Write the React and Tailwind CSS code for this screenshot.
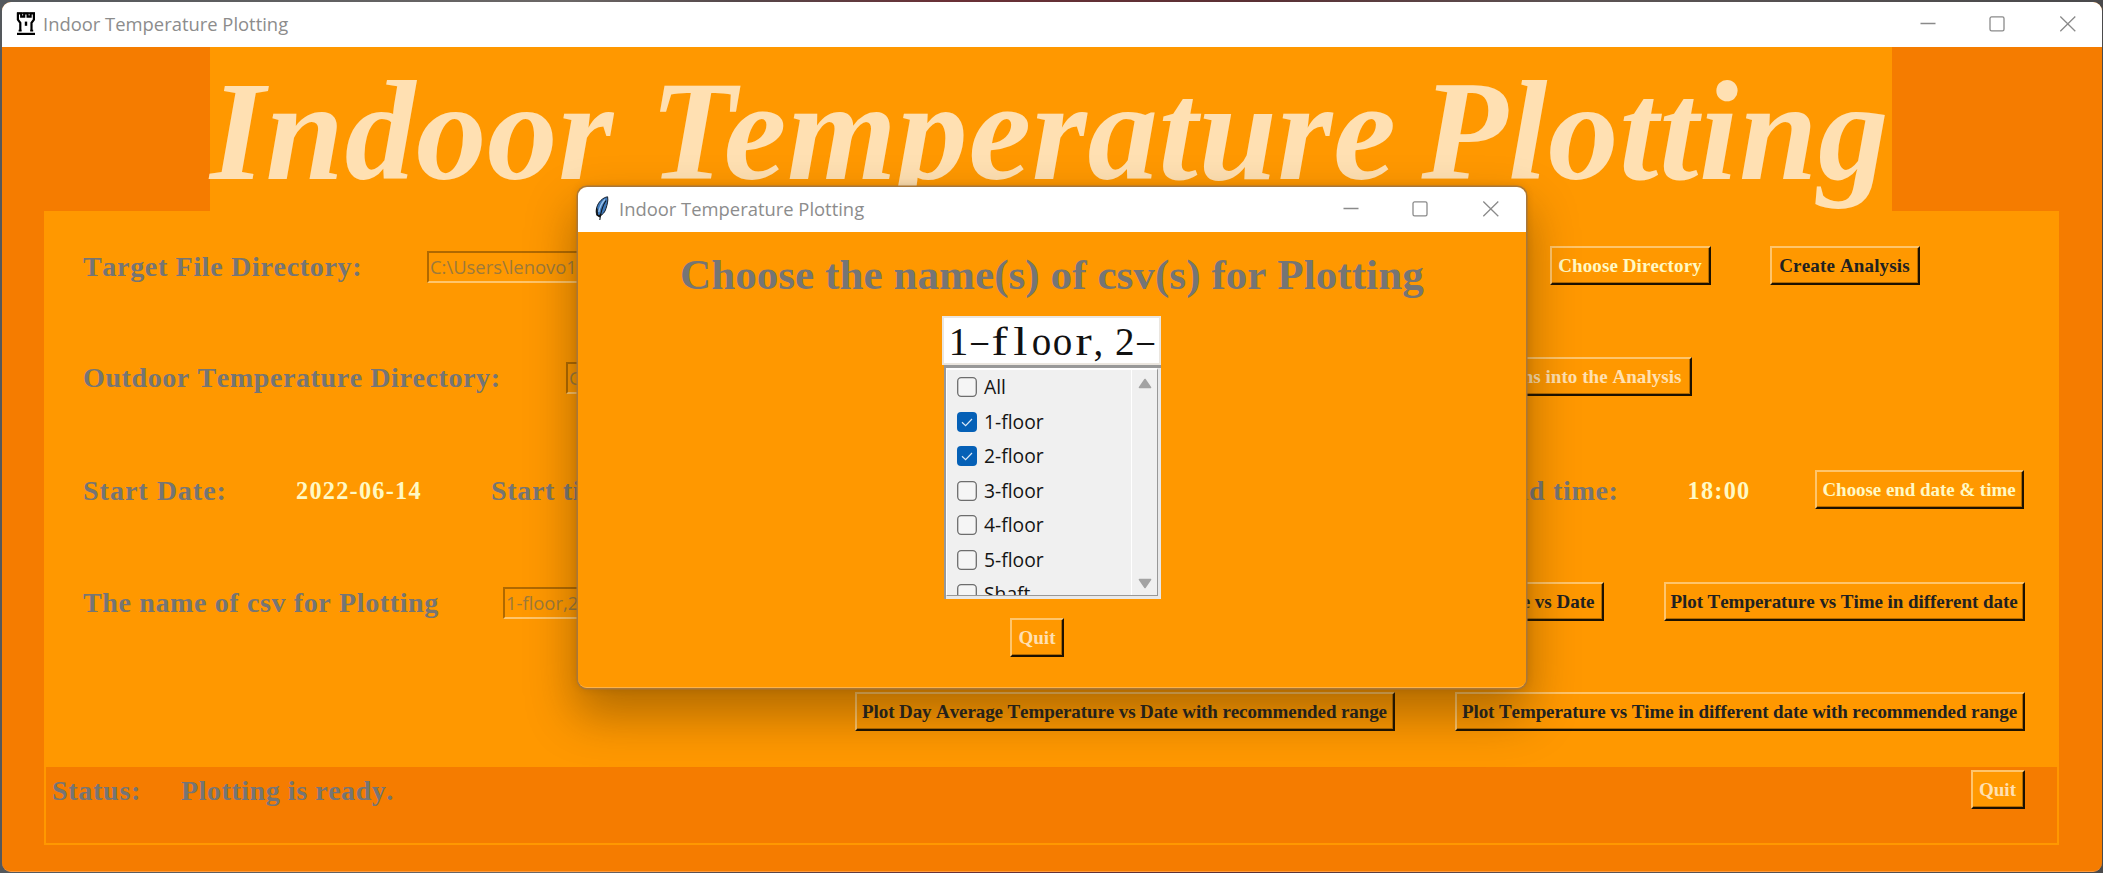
const SERIF = "font-['Liberation_Serif',serif] font-bold [font-kerning:none]";
const SANS = "font-['Open_Sans',sans-serif]";

function Label({ children, className = "tracking-[0.68px]" }) {
  return (
    <span className={`${SERIF} text-[28px] leading-[41px] text-[#757575] whitespace-pre shrink-0 ${className}`}>
      {children}
    </span>
  );
}

function Value({ children, className = "" }) {
  return (
    <span className={`${SERIF} text-[24.3px] leading-[41px] tracking-[1.25px] text-[#fff9c4] whitespace-pre shrink-0 ${className}`}>
      {children}
    </span>
  );
}

function Button({ children, className = "" }) {
  return (
    <button
      className={`${SERIF} h-[39px] shrink-0 bg-[#ff9800] border-2 border-t-[#ffc56b] border-l-[#ffc56b] border-r-[#1c1100] border-b-[#1c1100] shadow-[inset_-1px_-1px_0_#b46b00] text-[19px] leading-[35px] whitespace-pre flex ${className}`}
    >
      {children}
    </button>
  );
}

function Entry({ children, className = "" }) {
  return (
    <div
      className={`${SANS} h-[32px] mt-[5px] shrink-0 border-2 border-t-[#b06900] border-l-[#b06900] border-r-[#ffc56b] border-b-[#ffc56b] pl-[1px] text-[18.4px] leading-[27px] text-[#9c7a3c] whitespace-pre overflow-hidden ${className}`}
    >
      {children}
    </div>
  );
}

function WindowControls() {
  return (
    <svg width="156" height="16" viewBox="0 0 156 16" fill="none" stroke="#8a8a8a" strokeWidth="1.3" className="shrink-0">
      <path d="M0.5 7.5H15.5" />
      <rect x="70" y="0.9" width="14" height="14" rx="1.6" />
      <path d="M140.3 0.5L155.3 15.3M155.3 0.5L140.3 15.3" />
    </svg>
  );
}

function RookIcon() {
  return (
    <svg width="20" height="24" viewBox="0 0 20 24" className="shrink-0">
      <path
        d="M4.3 18.5V10.8L1.9 7.6V1.5H5.2V4.6H8.2V1.5H11.6V4.6H14.6V1.5H17.9V7.6L15.5 10.8V18.5"
        fill="none"
        stroke="#000"
        strokeWidth="2.2"
      />
      <rect x="1" y="0.3" width="18" height="1.6" fill="#000" />
      <path d="M2.6 18.6H5.6M14.2 18.6H17.2" stroke="#000" strokeWidth="1.6" />
      <rect x="8.8" y="9.6" width="2.4" height="4.2" fill="#000" />
      <rect x="1" y="20.8" width="18" height="2.2" fill="#000" />
    </svg>
  );
}

function FeatherIcon() {
  return (
    <svg width="14" height="25" viewBox="0 0 14 25" className="shrink-0">
      <path d="M12.6 0.8C8 1.4 3 6 1.6 12C1 15 1 17 2 19L4.4 20.4C8 18.5 10 16 11 12.5C12 9 13.4 5 12.6 0.8Z" fill="#3f78b8" stroke="#15202e" strokeWidth="1" />
      <path d="M10 3.500C6.500 7 4.800 11 3.800 16" fill="none" stroke="#9cc4ec" strokeWidth="1.3" />
      <path d="M11 4.500C8 9 6 14 4.800 24" fill="none" stroke="#101820" strokeWidth="1.1" />
      <path d="M1.800 12.500L2.200 19L4.500 20.500L6 18" fill="none" stroke="#111" strokeWidth="1.6" />
    </svg>
  );
}

function TitleBar({ icon, className = "" }) {
  return (
    <div className={`h-[45px] shrink-0 bg-white flex items-center pb-[2px] ${className}`}>
      {icon}
      <span className={`${SANS} text-[18.4px] leading-[26px] text-[#8c8c8c] whitespace-pre`}>Indoor Temperature Plotting</span>
      <div className="ml-auto flex">
        <WindowControls />
      </div>
    </div>
  );
}

const OPTIONS = [
  ["All", false],
  ["1-floor", true],
  ["2-floor", true],
  ["3-floor", false],
  ["4-floor", false],
  ["5-floor", false],
  ["Shaft", false],
];

function Option({ label, checked }) {
  return (
    <div className="h-[34.5px] shrink-0 flex items-center gap-[7px] pl-[10px]">
      <svg width="20" height="20" viewBox="0 0 20 20" className="shrink-0">
        {checked ? (
          <>
            <rect x="0" y="0" width="20" height="20" rx="4" fill="#0560b6" />
            <path d="M5 10.300L8.600 13.600L15 7" fill="none" stroke="#dbe9f7" strokeWidth="1.2" />
          </>
        ) : (
          <rect x="0.7" y="0.7" width="18.6" height="18.6" rx="3.5" fill="#f5f5f5" stroke="#6d6d6d" strokeWidth="1.3" />
        )}
      </svg>
      <span className={`${SANS} text-[19.3px] leading-[26px] text-[#151515]`}>{label}</span>
    </div>
  );
}

const GLYPH_SHAPE = {
  "-": "inline-block scale-x-[1.7] scale-y-[0.7] translate-y-[-1px]",
  f: "inline-block scale-x-[1.25]",
  l: "inline-block scale-x-[1.3]",
  r: "inline-block scale-x-[1.25]",
};

function ComboBox() {
  return (
    <div className="w-[219px] flex flex-col">
      <div className="h-[49px] bg-white border-2 border-[#ebe6df] pl-[4px] flex overflow-hidden">
        {"1-floor,2-".split("").map((c, i) => (
          <span
            key={i}
            className={`font-['Liberation_Serif',serif] w-[20.8px] shrink-0 flex text-[39px] leading-[47px] text-[#111] ${c === "," ? "justify-start" : "justify-center"}`}
          >
            <span className={GLYPH_SHAPE[c]}>{c}</span>
          </span>
        ))}
      </div>
      <div className="h-[234px] ml-[2px] bg-[#e9e9e9] border-l-2 border-t-[3px] border-[#989898] pr-[3px] pb-[3px]">
        <div className="h-full bg-[#f0f0f0] border border-t-2 border-l-white border-t-white border-r-[#989898] border-b-[#989898] flex">
          <div className="flex-1 flex flex-col overflow-hidden">
            {OPTIONS.map(([label, checked]) => (
              <Option key={label} label={label} checked={checked} />
            ))}
          </div>
          <div className="w-[26px] border-l border-white flex flex-col items-center justify-between pt-[8px] pb-[6px]">
            <svg width="14" height="11" viewBox="0 0 14 11">
              <path d="M7 1.500L12.500 9.500H1.500Z" fill="#a3a3a3" stroke="#a3a3a3" strokeWidth="1.6" strokeLinejoin="round" />
            </svg>
            <svg width="14" height="11" viewBox="0 0 14 11">
              <path d="M7 9.500L12.500 1.500H1.500Z" fill="#a3a3a3" stroke="#a3a3a3" strokeWidth="1.6" strokeLinejoin="round" />
            </svg>
          </div>
        </div>
      </div>
    </div>
  );
}

function Dialog() {
  return (
    <div className="absolute left-[578px] top-[187px] w-[948px] h-[501px] rounded-[9px] bg-[#ff9800] shadow-[0_0_0_1.5px_#a8773a,0_24px_48px_3px_rgba(60,40,0,0.4),0_0_8px_rgba(60,40,0,0.2)]">
      <div className="w-full h-full rounded-[9px] overflow-hidden flex flex-col border-b border-[#ffb347]">
        <TitleBar icon={<span className="mr-[10px] flex"><FeatherIcon /></span>} className="pl-[17px] pr-[27px]" />
        <h2 className={`${SERIF} mt-[19px] ml-[102px] text-[43px] leading-[47px] tracking-[0.08px] text-[#757575] whitespace-pre`}>
          Choose the name(s) of csv(s) for Plotting
        </h2>
        <div className="mt-[18px] ml-[364px]">
          <ComboBox />
        </div>
        <Button className="mt-[19px] ml-[432px] w-[54px] justify-center text-[#ffe0b2]">Quit</Button>
      </div>
    </div>
  );
}

export default function App() {
  return (
    <div className="relative w-[2103px] h-[873px] overflow-hidden bg-[linear-gradient(90deg,#54585c_0%,#6b6766_27%,#55484a_35%,#6a3036_45%,#5a3034_60%,#5c5454_75%,#4a4a4c_100%)] pt-[2px] pl-[2px]">
      <div className="w-[2099.5px] h-[870px] rounded-[9px] overflow-hidden bg-[#f57c00] flex flex-col border-b border-[#ff9a3c]">
        <TitleBar icon={<span className="mr-[7px] flex"><RookIcon /></span>} className="pl-[14px] pr-[26px]" />

        <header className="h-[164px] shrink-0 ml-[208px] w-[1682px] bg-[#ff9800]">
          <h1 className="font-['Liberation_Serif',serif] font-bold italic text-[141px] leading-[168px] tracking-[0.7px] text-[#ffe0b2] whitespace-pre">
            Indoor Temperature<span className="[word-spacing:-11px]"> </span>Plotting
          </h1>
        </header>

        <main className="h-[634px] shrink-0 ml-[42px] w-[2014.5px] bg-[#ff9800] p-[2px] pt-[35px] flex flex-col">
          <div className="h-[39px] shrink-0 flex pl-[37px] pr-[137px]">
            <Label className="w-[344px] tracking-[0.68px]">Target File Directory:</Label>
            <Entry className="w-[900px]">C:\Users\lenovo1</Entry>
            <Button className="ml-auto w-[161px] justify-center text-[#fff9c4] tracking-[0.1px]">Choose Directory</Button>
            <Button className="ml-[59px] w-[150px] justify-center text-[#212121] tracking-[0.15px]">Create Analysis</Button>
          </div>
          <div className="h-[39px] shrink-0 mt-[72px] flex pl-[37px] pr-[365px]">
            <Label className="w-[483px] tracking-[0.6px]">Outdoor Temperature Directory:</Label>
            <Entry className="w-[700px]">C</Entry>
            <Button className="ml-auto w-[220px] justify-end pr-[8px] text-[#ffe0b2] tracking-[0.05px]">ns into the Analysis</Button>
          </div>
          <div className="h-[39px] shrink-0 mt-[74px] flex pl-[37px] pr-[33px]">
            <Label className="w-[213px] tracking-[1px]">Start Date:</Label>
            <Value className="w-[195px]">2022-06-14</Value>
            <Label>Start ti</Label>
            <Label className="ml-auto mr-[69px] tracking-[0.68px]">nd time:</Label>
            <Value className="w-[127px]">18:00</Value>
            <Button className="w-[209px] justify-center text-[#fff9c4] tracking-[-0.05px]">Choose end date &amp; time</Button>
          </div>
          <div className="h-[39px] shrink-0 mt-[73px] flex pl-[37px] pr-[32px]">
            <Label className="w-[420px] tracking-[0.63px]">The name of csv for Plotting</Label>
            <Entry className="w-[300px]">1-floor,2</Entry>
            <Button className="ml-auto w-[120px] justify-end pr-[7px] text-[#212121]">e vs Date</Button>
            <Button className="ml-[60px] w-[361px] justify-center text-[#212121] tracking-[-0.05px]">Plot Temperature vs Time in different date</Button>
          </div>
          <div className="h-[39px] shrink-0 mt-[71px] flex justify-end pr-[32px]">
            <Button className="w-[540px] justify-center text-[#212121] tracking-[-0.1px]">Plot Day Average Temperature vs Date with recommended range</Button>
            <Button className="ml-[60px] w-[570px] justify-center text-[#212121] tracking-[-0.09px]">
              Plot Temperature vs Time in different date with recommended range
            </Button>
          </div>
          <div className="mt-[36px] flex-1 bg-[#f57c00] flex pl-[6px] pr-[32px] pt-[3px]">
            <Label className="w-[129px] tracking-[0.72px]">Status:</Label>
            <Label className="tracking-[0.55px]">Plotting is ready.</Label>
            <Button className="ml-auto w-[54px] justify-center text-[#ffe0b2]">Quit</Button>
          </div>
        </main>
      </div>
      <Dialog />
    </div>
  );
}
